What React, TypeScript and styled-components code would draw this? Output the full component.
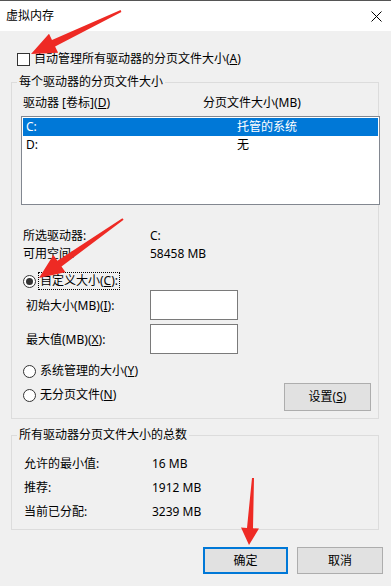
import React from 'react';
import styled, { createGlobalStyle } from 'styled-components';

const GlobalStyle = createGlobalStyle`
  html, body {
    margin: 0;
    padding: 0;
    background: #f0f0f0;
  }
  body {
    font-family: "Noto Sans", "Noto Sans CJK SC", sans-serif;
    font-size: 12px;
    color: #000;
  }
`;

const Window = styled.div`
  position: relative;
  width: 391px;
  height: 586px;
  box-sizing: border-box;
  border-top: 1px solid #555;
  background: #f0f0f0;
  display: flex;
  flex-direction: column;
  overflow: hidden;
`;

const TitleBar = styled.div`
  flex: none;
  height: 30px;
  background: #fff;
  display: flex;
  align-items: center;
  justify-content: space-between;
  padding: 0 9px 0 6px;
  line-height: 16px;
`;

const Body = styled.div`
  display: flex;
  flex-direction: column;
  padding: 0 12px 0 11px;
`;

const Row = styled.div<{ $top?: number; $indent?: number }>`
  display: flex;
  align-items: center;
  height: 18px;
  line-height: 16px;
  margin-top: ${(p) => p.$top || 0}px;
  padding-left: ${(p) => p.$indent || 0}px;
  gap: 4px;
`;

const CheckBox = styled.span`
  width: 13px;
  height: 13px;
  box-sizing: border-box;
  border: 1px solid #333;
  background: #fff;
  flex: none;
`;

const Radio = styled.span<{ $checked?: boolean }>`
  width: 13px;
  height: 13px;
  box-sizing: border-box;
  border: 1px solid #333;
  border-radius: 50%;
  background: #fff;
  flex: none;
  display: flex;
  align-items: center;
  justify-content: center;

  &::after {
    content: '';
    display: ${(p) => (p.$checked ? 'block' : 'none')};
    width: 7px;
    height: 7px;
    border-radius: 50%;
    background: #333;
  }
`;

const FocusLabel = styled.span`
  border: 1px dotted #000;
  padding: 0 1px;
  margin-left: -2px;
  line-height: 16px;
`;

const Group = styled.fieldset<{ $top: number }>`
  margin: ${(p) => p.$top}px 0 0 0;
  padding: 0;
  min-width: 0;
  border: 1px solid #dcdcdc;
`;

const Legend = styled.legend`
  margin-left: 5px;
  padding: 0 2px;
  line-height: 18px;
  height: 18px;
`;

const GroupBody = styled.div<{ $left: number; $bottom: number }>`
  display: flex;
  flex-direction: column;
  padding: 0 0 ${(p) => p.$bottom}px ${(p) => p.$left}px;
`;

const Columns = styled.div<{ $first: number; $top?: number; $indent?: number }>`
  display: grid;
  grid-template-columns: ${(p) => p.$first}px 1fr;
  align-items: center;
  height: 18px;
  line-height: 16px;
  margin-top: ${(p) => p.$top || 0}px;
  padding-left: ${(p) => p.$indent || 0}px;
`;

const ListBox = styled.div`
  margin-top: 4px;
  margin-right: -2px;
  height: 89px;
  box-sizing: border-box;
  border: 1px solid #828790;
  background: #fff;
  padding: 1px;
`;

const ListRow = styled.div<{ $selected?: boolean }>`
  display: grid;
  grid-template-columns: 211px 1fr;
  align-items: center;
  height: 18px;
  line-height: 16px;
  padding-left: 3px;
  background: ${(p) => (p.$selected ? '#0078d7' : 'transparent')};
  color: ${(p) => (p.$selected ? '#fff' : '#000')};
`;

const SizeRow = styled.div<{ $top?: number }>`
  display: grid;
  grid-template-columns: 124px 88px;
  align-items: center;
  height: 30px;
  margin-top: ${(p) => p.$top || 0}px;
  padding-left: 5px;
`;

const TextBox = styled.div`
  width: 88px;
  height: 30px;
  box-sizing: border-box;
  border: 1px solid #7a7a7a;
  background: #fff;
`;

const BottomRow = styled.div`
  display: flex;
  align-items: flex-start;
  margin-top: 3px;
  height: 28px;
`;

const Button = styled.button<{ $w: number; $h: number; $default?: boolean }>`
  width: ${(p) => p.$w}px;
  height: ${(p) => p.$h}px;
  box-sizing: border-box;
  background: #e1e1e1;
  border: ${(p) => (p.$default ? '2px solid #0078d7' : '1px solid #adadad')};
  font-family: inherit;
  font-size: 12px;
  color: #000;
  padding: 0;
  line-height: 16px;
`;

const SetButton = styled(Button)`
  margin-left: auto;
  margin-right: 7px;
`;

const ButtonRow = styled.div`
  display: flex;
  justify-content: flex-end;
  gap: 9px;
  margin-top: 17px;
  margin-right: -4px;
`;

const Overlay = styled.svg`
  position: absolute;
  left: 0;
  top: 0;
  pointer-events: none;
`;

const CloseIcon = () => (
  <svg width="11" height="11" viewBox="0 0 11 11">
    <path d="M0.5 0.5 L10.5 10.5 M10.5 0.5 L0.5 10.5" stroke="#000" strokeWidth="1" fill="none" />
  </svg>
);

function arrow(x1: number, y1: number, x2: number, y2: number, tailW: number, neckW: number, headW: number, headL: number) {
  const len = Math.hypot(x2 - x1, y2 - y1);
  const ux = (x2 - x1) / len;
  const uy = (y2 - y1) / len;
  const px = -uy;
  const py = ux;
  const bx = x2 - ux * headL;
  const by = y2 - uy * headL;
  const pts = [
    [x1 + (px * tailW) / 2, y1 + (py * tailW) / 2],
    [bx + (px * neckW) / 2, by + (py * neckW) / 2],
    [bx + (px * headW) / 2, by + (py * headW) / 2],
    [x2, y2],
    [bx - (px * headW) / 2, by - (py * headW) / 2],
    [bx - (px * neckW) / 2, by - (py * neckW) / 2],
    [x1 - (px * tailW) / 2, y1 - (py * tailW) / 2],
  ];
  return pts.map((p) => p[0].toFixed(1) + ',' + p[1].toFixed(1)).join(' ');
}

const App: React.FC = () => {
  return (
    <>
      <GlobalStyle />
      <Window>
        <TitleBar>
          <span>虚拟内存</span>
          <CloseIcon />
        </TitleBar>
        <Body>
          <Row $top={19} $indent={6}>
            <CheckBox />
            <span>自动管理所有驱动器的分页文件大小(<u>A</u>)</span>
          </Row>

          <Group $top={5}>
            <Legend>每个驱动器的分页文件大小</Legend>
            <GroupBody $left={9} $bottom={7}>
              <Columns $first={180} $top={3} $indent={2}>
                <span>驱动器 [卷标](<u>D</u>)</span>
                <span>分页文件大小(MB)</span>
              </Columns>
              <ListBox>
                <ListRow $selected>
                  <span>C:</span>
                  <span>托管的系统</span>
                </ListRow>
                <ListRow>
                  <span>D:</span>
                  <span>无</span>
                </ListRow>
              </ListBox>

              <Columns $first={127} $top={22} $indent={2}>
                <span>所选驱动器:</span>
                <span>C:</span>
              </Columns>
              <Columns $first={127} $indent={2}>
                <span>可用空间:</span>
                <span>58458 MB</span>
              </Columns>

              <Row $top={9} $indent={2}>
                <Radio $checked />
                <FocusLabel>自定义大小(<u>C</u>):</FocusLabel>
              </Row>
              <SizeRow>
                <span>初始大小(MB)(<u>I</u>):</span>
                <TextBox />
              </SizeRow>
              <SizeRow $top={4}>
                <span>最大值(MB)(<u>X</u>):</span>
                <TextBox />
              </SizeRow>

              <Row $top={8} $indent={2}>
                <Radio />
                <span>系统管理的大小(<u>Y</u>)</span>
              </Row>
              <BottomRow>
                <Row $top={3} $indent={2}>
                  <Radio />
                  <span>无分页文件(<u>N</u>)</span>
                </Row>
                <SetButton $w={87} $h={28}>设置(<u>S</u>)</SetButton>
              </BottomRow>
            </GroupBody>
          </Group>

          <Group $top={7}>
            <Legend>所有驱动器分页文件大小的总数</Legend>
            <GroupBody $left={12} $bottom={8}>
              <Columns $first={128} $top={11}>
                <span>允许的最小值:</span>
                <span>16 MB</span>
              </Columns>
              <Columns $first={128} $top={6}>
                <span>推荐:</span>
                <span>1912 MB</span>
              </Columns>
              <Columns $first={128} $top={6}>
                <span>当前已分配:</span>
                <span>3239 MB</span>
              </Columns>
            </GroupBody>
          </Group>

          <ButtonRow>
            <Button $w={85} $h={27} $default>确定</Button>
            <Button $w={86} $h={27}>取消</Button>
          </ButtonRow>
        </Body>

        <Overlay width="391" height="586" viewBox="0 0 391 586">
          <polygon points={arrow(121, 10, 31, 53, 2, 7, 21, 25)} fill="#ee2a24" />
          <polygon points={arrow(123, 218, 39, 277, 2, 7, 21, 25)} fill="#ee2a24" />
          <polygon points={arrow(253, 477, 249, 544, 2, 6, 18, 17)} fill="#ee2a24" />
        </Overlay>
      </Window>
    </>
  );
};

export default App;
